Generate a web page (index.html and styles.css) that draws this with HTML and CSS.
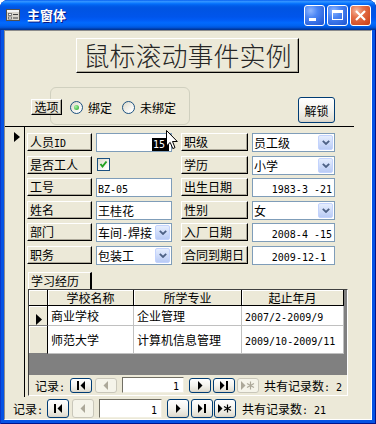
FILE: index.html
```html
<!DOCTYPE html>
<html lang="zh">
<head>
    <meta charset="utf-8">
    <title>主窗体</title>
    <link rel="stylesheet" href="styles.css">
</head>
<body>
<div class="window">
    <div class="titlebar">
        <svg class="app-icon" width="14" height="12" viewBox="0 0 14 12">
            <rect x="0.5" y="0.5" width="13" height="11" fill="#d8d4cc" stroke="#505050"/>
            <rect x="1" y="1" width="12" height="2" fill="#f4f4f4"/>
            <rect x="2.5" y="4.5" width="3" height="2" fill="#fff" stroke="#606060" stroke-width="0.8"/>
            <rect x="2.5" y="8" width="3" height="2" fill="#fff" stroke="#606060" stroke-width="0.8"/>
            <rect x="7" y="5" width="5" height="1" fill="#404040"/>
            <rect x="7" y="8.5" width="5" height="1" fill="#404040"/>
        </svg>
        <span class="title">主窗体</span>
        <div class="caption-btns">
            <span class="cap">
                <svg width="21" height="21" viewBox="0 0 21 21"><rect x="5" y="13" width="7" height="3" fill="#fff"/></svg>
            </span>
            <span class="cap">
                <svg width="21" height="21" viewBox="0 0 21 21"><rect x="5.5" y="5.5" width="10" height="9" fill="none" stroke="#fff"/><rect x="5" y="5" width="11" height="3" fill="#fff"/></svg>
            </span>
            <span class="cap cap-close">
                <svg width="21" height="21" viewBox="0 0 21 21"><path d="M6 6 L15 15 M15 6 L6 15" stroke="#fff" stroke-width="2.2"/></svg>
            </span>
        </div>
    </div>

    <div class="client">
        <div class="form-header">
            <div class="banner">鼠标滚动事件实例</div>
            <div class="opt-row">
                <div class="raised opt-btn">选项</div>
                <div class="opt-frame">
                    <span class="radio"><span class="radio-dot on"></span>绑定</span>
                    <span class="radio second"><span class="radio-dot"></span>未绑定</span>
                </div>
                <div class="xp-btn unlock">解锁</div>
            </div>
        </div>

        <div class="detail">
            <div class="rec-sel">
                <svg width="6" height="10" viewBox="0 0 6 10"><polygon points="0,0 6,5 0,10" fill="#000"/></svg>
            </div>
            <div class="detail-body">
                <div class="fields">
                    <div class="raised lbl">人员<span class="en">ID</span></div>
                    <div class="box num">
                        <span class="en sel-text">15</span>
                        <svg class="cursor" width="12" height="20" viewBox="0 0 12 20">
                            <path d="M0.5 0.5 L0.5 16 L4.2 12.4 L6.8 18.6 L9 17.6 L6.5 11.5 L11.3 11.5 Z" fill="#fff" stroke="#000"/>
                        </svg>
                    </div>
                    <div class="raised lbl r">职级</div>
                    <div class="box combo"><span>员工级</span><span class="drop"><svg width="8" height="5" viewBox="0 0 8 5"><path d="M0.8 0.8 L4 4 L7.2 0.8" fill="none" stroke="#4d6185" stroke-width="1.8"/></svg></span></div>

                    <div class="raised lbl">是否工人</div>
                    <div class="check-cell">
                        <span class="check"><svg width="11" height="11" viewBox="0 0 11 11"><path d="M2.5 5 L4.5 7.5 L8.5 2.5" fill="none" stroke="#21a121" stroke-width="2"/></svg></span>
                    </div>
                    <div class="raised lbl r">学历</div>
                    <div class="box combo"><span>小学</span><span class="drop"><svg width="8" height="5" viewBox="0 0 8 5"><path d="M0.8 0.8 L4 4 L7.2 0.8" fill="none" stroke="#4d6185" stroke-width="1.8"/></svg></span></div>

                    <div class="raised lbl">工号</div>
                    <div class="box"><span class="en">BZ-05</span></div>
                    <div class="raised lbl r">出生日期</div>
                    <div class="box num"><span class="en">1983-3 -21</span></div>

                    <div class="raised lbl">姓名</div>
                    <div class="box">王桂花</div>
                    <div class="raised lbl r">性别</div>
                    <div class="box combo"><span>女</span><span class="drop"><svg width="8" height="5" viewBox="0 0 8 5"><path d="M0.8 0.8 L4 4 L7.2 0.8" fill="none" stroke="#4d6185" stroke-width="1.8"/></svg></span></div>

                    <div class="raised lbl">部门</div>
                    <div class="box combo"><span>车间<span class="en">-</span>焊接</span><span class="drop"><svg width="8" height="5" viewBox="0 0 8 5"><path d="M0.8 0.8 L4 4 L7.2 0.8" fill="none" stroke="#4d6185" stroke-width="1.8"/></svg></span></div>
                    <div class="raised lbl r">入厂日期</div>
                    <div class="box num"><span class="en">2008-4 -15</span></div>

                    <div class="raised lbl">职务</div>
                    <div class="box combo"><span>包装工</span><span class="drop"><svg width="8" height="5" viewBox="0 0 8 5"><path d="M0.8 0.8 L4 4 L7.2 0.8" fill="none" stroke="#4d6185" stroke-width="1.8"/></svg></span></div>
                    <div class="raised lbl r">合同到期日</div>
                    <div class="box num inset"><span class="en">2009-12-1</span></div>
                </div>

                <div class="sub-tab">学习经历</div>
                <div class="subform">
                    <div class="sheet">
                        <div class="hd corner"></div>
                        <div class="hd">学校名称</div>
                        <div class="hd">所学专业</div>
                        <div class="hd">起止年月</div>

                        <div class="sel">
                            <svg width="6" height="11" viewBox="0 0 6 11"><polygon points="0,0 6,5.5 0,11" fill="#000"/></svg>
                        </div>
                        <div class="cell">商业学校</div>
                        <div class="cell">企业管理</div>
                        <div class="cell"><span class="en">2007/2-2009/9</span></div>

                        <div class="sel tall"></div>
                        <div class="cell tall">师范大学</div>
                        <div class="cell tall">计算机信息管理</div>
                        <div class="cell tall"><span class="en">2009/10-2009/11</span></div>
                    </div>
                    <div class="nav sub-nav">
                        <span class="rec-lbl">记录<span class="en">:</span></span>
                        <span class="nb"><svg width="9" height="9" viewBox="0 0 9 9"><rect x="0" y="0" width="2" height="9"/><polygon points="8,0 8,9 3.5,4.5"/></svg></span>
                        <span class="nb off prev"><svg width="6" height="9" viewBox="0 0 6 9"><polygon points="5,0 5,9 0.5,4.5"/></svg></span>
                        <span class="rec-box"><span class="en">1</span></span>
                        <span class="nb next"><svg width="6" height="9" viewBox="0 0 6 9"><polygon points="1,0 1,9 5.5,4.5"/></svg></span>
                        <span class="nb last"><svg width="9" height="9" viewBox="0 0 9 9"><polygon points="0,0 0,9 4.5,4.5"/><rect x="6" y="0" width="2" height="9"/></svg></span>
                        <span class="nb off last"><svg width="14" height="9" viewBox="0 0 14 9"><polygon points="0,0 0,9 4.5,4.5"/><path d="M9.5 0.5 V8.5 M6 2.5 L13 6.5 M6 6.5 L13 2.5" stroke-width="1.2"/></svg></span>
                        <span class="total">共有记录数<span class="en">: 2</span></span>
                    </div>
                </div>
            </div>
        </div>

        <div class="nav main-nav">
            <span class="rec-lbl">记录<span class="en">:</span></span>
            <span class="nb"><svg width="9" height="9" viewBox="0 0 9 9"><rect x="0" y="0" width="2" height="9"/><polygon points="8,0 8,9 3.5,4.5"/></svg></span>
            <span class="nb off prev"><svg width="6" height="9" viewBox="0 0 6 9"><polygon points="5,0 5,9 0.5,4.5"/></svg></span>
            <span class="rec-box"><span class="en">1</span></span>
            <span class="nb next"><svg width="6" height="9" viewBox="0 0 6 9"><polygon points="1,0 1,9 5.5,4.5"/></svg></span>
            <span class="nb last"><svg width="9" height="9" viewBox="0 0 9 9"><polygon points="0,0 0,9 4.5,4.5"/><rect x="6" y="0" width="2" height="9"/></svg></span>
            <span class="nb new"><svg width="14" height="9" viewBox="0 0 14 9"><polygon points="0,0 0,9 4.5,4.5"/><path d="M9.5 0.5 V8.5 M6 2.5 L13 6.5 M6 6.5 L13 2.5" stroke-width="1.2"/></svg></span>
            <span class="total">共有记录数<span class="en">: 21</span></span>
        </div>
    </div>
</div>
</body>
</html>
```

FILE: styles.css
```css
* {
    box-sizing: border-box;
}

html, body {
    margin: 0;
    padding: 0;
}

body {
    width: 376px;
    height: 424px;
    overflow: hidden;
    font-family: "Noto Sans CJK SC", "Noto Sans", sans-serif;
    font-size: 12px;
    color: #000;
    background: #fff;
}

.en {
    font-family: "DejaVu Sans Mono", monospace;
    font-size: 10px;
}

/* window frame */

.window {
    width: 376px;
    height: 424px;
    display: flex;
    flex-direction: column;
    background: #0553e4;
    border-radius: 8px 8px 0 0;
    box-shadow: inset 1px 0 #0a37c8, inset -1px 0 #00138c, inset 0 -1px #00138c;
}

.titlebar {
    flex: none;
    height: 30px;
    display: flex;
    align-items: center;
    padding-left: 6px;
    border-radius: 8px 8px 0 0;
    background: linear-gradient(to bottom, #0058ee 0%, #3593ff 4%, #288eff 7%, #127dff 10%, #036ffc 13%, #0262ee 17%, #0057e5 23%, #0054e3 30%, #0055eb 56%, #005bf5 66%, #026afe 76%, #0062ef 86%, #0052d6 92%, #0040ab 96%, #003092 100%);
}

.app-icon {
    flex: none;
}

.title {
    margin-left: 7px;
    color: #fff;
    font-size: 13px;
    font-weight: bold;
    text-shadow: 1px 1px #0a1883;
    line-height: 16px;
}

.caption-btns {
    margin-left: auto;
    margin-top: 1px;
    padding-right: 5px;
    display: flex;
    gap: 2px;
}

.cap {
    width: 21px;
    height: 21px;
    border: 1px solid #fff;
    border-radius: 3px;
    display: flex;
    align-items: center;
    justify-content: center;
    overflow: hidden;
    background: radial-gradient(circle at 30% 25%, #8fb6ff 0%, #4c86f4 35%, #2a62dc 80%, #1f55d0 100%);
}

.cap svg {
    margin: -1px;
}

.cap-close {
    background: radial-gradient(circle at 30% 25%, #f5b7a0 0%, #e5704a 35%, #d24b22 80%, #c13d15 100%);
}

.client {
    flex: 1;
    margin: 0 4px 4px;
    display: flex;
    flex-direction: column;
    background: #ece9d8;
    border-top: 1px solid #8c8c8c;
    border-left: 1px solid #8c8c8c;
    border-right: 1px solid #fff;
    border-bottom: 1px solid #fff;
}

/* form header */

.form-header {
    flex: none;
    height: 95px;
    padding-top: 7px;
}

.banner {
    width: 223px;
    height: 35px;
    margin-left: 71px;
    border-top: 1px solid #fff;
    border-left: 1px solid #fff;
    border-right: 1px solid #000;
    border-bottom: 1px solid #000;
    box-shadow: inset -1px -1px #aca899;
    font-size: 26px;
    font-weight: 300;
    line-height: 32px;
    text-align: center;
    color: #262626;
}

.opt-row {
    display: flex;
    align-items: flex-start;
    margin-top: 14px;
    padding-left: 26px;
}

.raised {
    background: #ece9d8;
    border-top: 1px solid #fff;
    border-left: 1px solid #fff;
    border-right: 1px solid #000;
    border-bottom: 1px solid #000;
    box-shadow: inset -1px -1px #aca899;
    white-space: nowrap;
}

.opt-btn {
    position: relative;
    z-index: 1;
    width: 31px;
    height: 16px;
    margin-top: 12px;
    margin-right: -12px;
    line-height: 14px;
    text-align: center;
}

.opt-frame {
    width: 140px;
    height: 38px;
    display: flex;
    align-items: center;
    padding: 3px 0 0 19px;
    border: 1px solid #d0d0bf;
    border-radius: 6px;
}

.radio {
    display: flex;
    align-items: center;
    gap: 5px;
    line-height: 14px;
}

.radio.second {
    margin-left: 10px;
}

.radio-dot {
    width: 13px;
    height: 13px;
    border: 1px solid #1c5180;
    border-radius: 50%;
    background: linear-gradient(135deg, #dcd9c9, #fff 85%);
    display: flex;
    align-items: center;
    justify-content: center;
}

.radio-dot.on::after {
    content: "";
    width: 5px;
    height: 5px;
    border-radius: 50%;
    background: radial-gradient(circle at 35% 35%, #a6f2a6, #21a121);
}

.xp-btn {
    border: 1px solid #003c74;
    border-radius: 3px;
    background: linear-gradient(to bottom, #fff 0%, #f4f3ee 50%, #e4e1d6 90%, #d6d0c5 100%);
    display: flex;
    align-items: center;
    justify-content: center;
}

.unlock {
    width: 37px;
    height: 26px;
    margin-left: 108px;
    margin-top: 10px;
}

/* detail section */

.detail {
    flex: none;
    width: 349px;
    height: 271px;
    display: flex;
    border-top: 1px solid #000;
}

.rec-sel {
    width: 20px;
    padding: 1px 0 0 9px;
    border-right: 1px solid #000;
}

.detail-body {
    flex: 1;
}

.fields {
    display: grid;
    grid-template-columns: 65px 76px 72px 83px;
    grid-auto-rows: 19px;
    column-gap: 4px;
    row-gap: 3.6px;
    padding: 6px 0 0 2px;
}

.lbl {
    height: 18px;
    padding-left: 2px;
    line-height: 16px;
}

.lbl.r {
    margin-left: 5px;
}

.box {
    position: relative;
    height: 19px;
    padding: 0 2px 0 1px;
    border: 1px solid #7f9db9;
    background: #fff;
    line-height: 17px;
    white-space: nowrap;
}

.box.num {
    text-align: right;
}

.box.inset {
    padding-right: 8px;
}

.sel-text {
    background: #000;
    color: #fff;
    padding: 1px 4px 1px 1px;
}

.cursor {
    position: absolute;
    left: 69px;
    top: -4px;
}

.combo {
    display: flex;
    justify-content: space-between;
    padding-right: 1px;
    overflow: hidden;
}

.drop {
    flex: none;
    width: 15px;
    height: 15px;
    margin-top: 1px;
    border: 1px solid #c3d3fd;
    border-radius: 2px;
    background: linear-gradient(to bottom, #e6eefe, #b9cbf5);
    display: flex;
    align-items: center;
    justify-content: center;
}

.check-cell {
    padding: 2px 0 0 1px;
}

.check {
    width: 13px;
    height: 13px;
    border: 1px solid #1c5180;
    background: linear-gradient(135deg, #dcd9c9, #fff 85%);
    display: flex;
    align-items: center;
    justify-content: center;
}

/* subform */

.sub-tab {
    width: 64px;
    height: 17px;
    margin: 7px 0 0 3px;
    padding-left: 2px;
    border-top: 1px solid #fff;
    border-left: 1px solid #fff;
    border-right: 2px solid #000;
    line-height: 16px;
}

.subform {
    width: 320px;
    height: 107px;
    margin-left: 3px;
    display: flex;
    flex-direction: column;
    border: 1px solid;
    border-color: #404040 #fff #fff #404040;
}

.sheet {
    height: 85px;
    display: grid;
    grid-template-columns: 19px 86px 108px 102px;
    grid-template-rows: 16px 20px 28px;
    align-content: start;
    background: #808080;
}

.hd {
    background: #ece9d8;
    border-right: 1px solid #000;
    border-bottom: 1px solid #000;
    box-shadow: inset 1px 1px #fff;
    text-align: center;
    line-height: 15px;
}

.sel {
    background: #ece9d8;
    border-right: 1px solid #000;
    border-bottom: 1px solid #808080;
    box-shadow: inset 1px 1px #fff;
    padding: 5px 0 0 7px;
}

.cell {
    background: #fff;
    border-right: 1px solid #c0c0c0;
    border-bottom: 1px solid #c0c0c0;
    padding-left: 3px;
    line-height: 19px;
    white-space: nowrap;
}

.cell.tall {
    line-height: 27px;
}

/* navigation bars */

.nav {
    display: flex;
    align-items: center;
    background: #ece9d8;
    white-space: nowrap;
}

.sub-nav {
    height: 20px;
    padding: 1px 0 0 6px;
}

.main-nav {
    flex: none;
    height: 22px;
    padding-left: 8px;
}

.rec-lbl {
    margin-right: 5px;
}

.main-nav .rec-lbl {
    margin-right: 4px;
}

.nb {
    width: 22px;
    height: 15px;
    border: 1px solid #003c74;
    border-radius: 3px;
    background: linear-gradient(to bottom, #fff 0%, #f4f3ee 50%, #e2dfd4 90%, #d6d0c5 100%);
    display: flex;
    align-items: center;
    justify-content: center;
    fill: #000;
    stroke: #000;
}

.main-nav .nb {
    height: 19px;
}

.nb rect, .nb polygon {
    stroke: none;
}

.nb.off {
    border-color: #c9c7ba;
    background: #f5f4ea;
    fill: #aca899;
    stroke: #aca899;
}

.nb.prev {
    margin-left: 3px;
}

.nb.next {
    margin-left: 5px;
}

.nb.last {
    margin-left: 2px;
}

.nb.new {
    margin-left: 1px;
}

.rec-box {
    width: 62px;
    height: 16px;
    margin-left: 5px;
    padding-right: 4px;
    background: #fff;
    border: 1px solid;
    border-color: #716f64 #f1efe2 #f1efe2 #716f64;
    text-align: right;
    line-height: 14px;
}

.main-nav .rec-box {
    width: 63px;
    height: 19px;
    line-height: 17px;
}

.total {
    margin-left: 5px;
}

.main-nav .total {
    margin-left: 6px;
}
```
